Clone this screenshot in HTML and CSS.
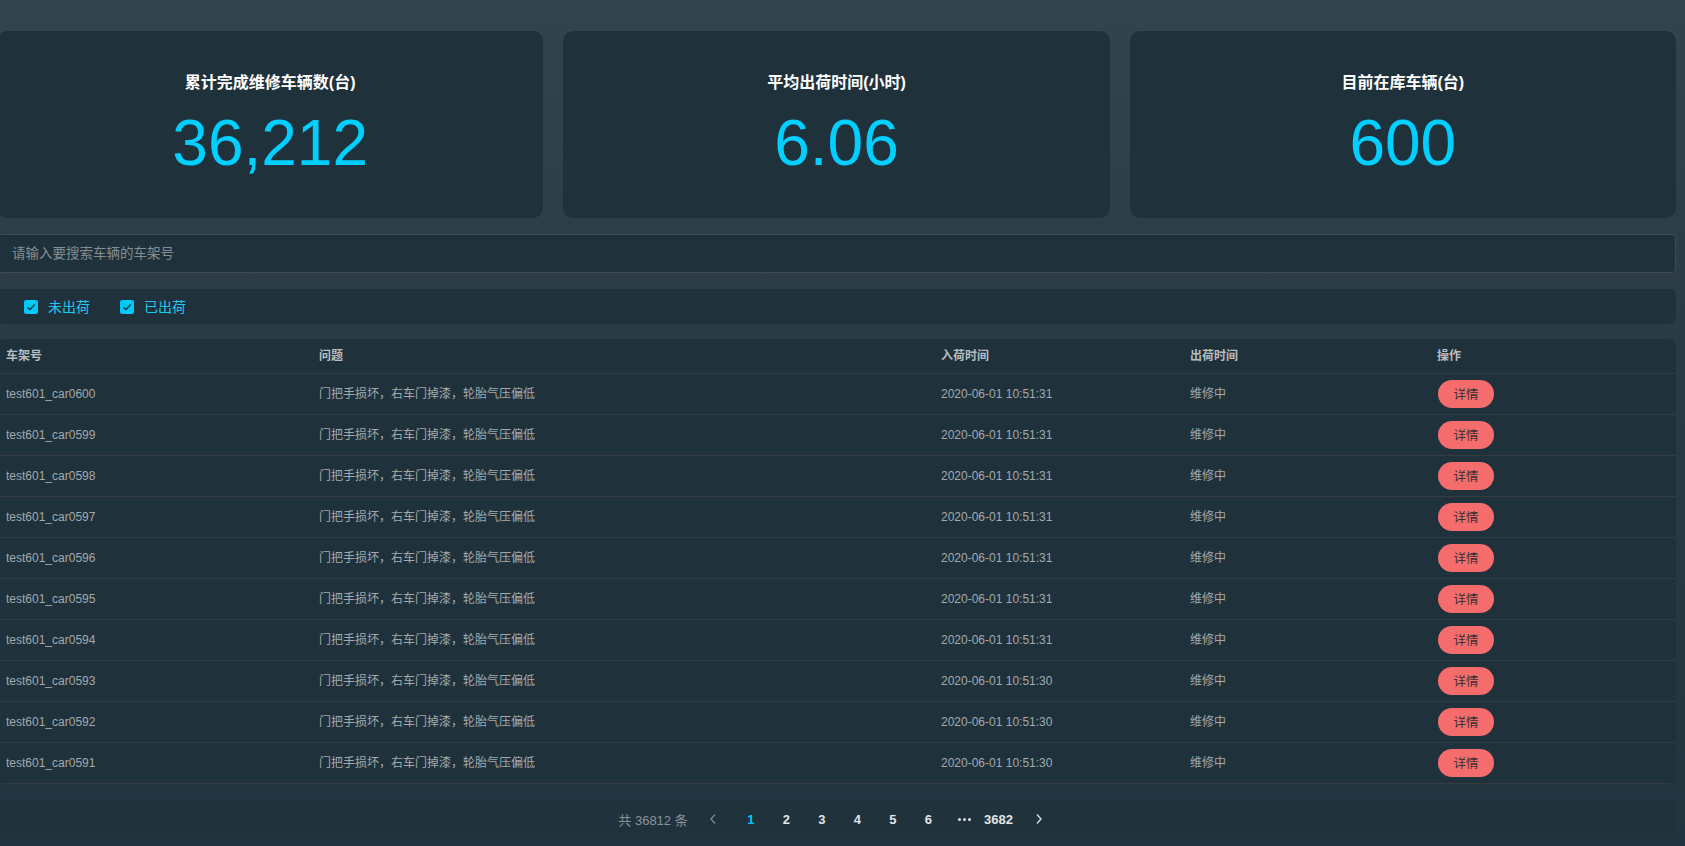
FILE: index.html
```html
<!DOCTYPE html>
<html lang="zh-CN">
<head>
<meta charset="utf-8">
<title>车辆维修</title>
<link rel="stylesheet" href="styles.css">
</head>
<body>
<div class="page">
  <div class="cards">
    <div class="card">
      <div class="card-title">累计完成维修车辆数(台)</div>
      <div class="card-num">36,212</div>
    </div>
    <div class="card">
      <div class="card-title">平均出荷时间(小时)</div>
      <div class="card-num">6.06</div>
    </div>
    <div class="card">
      <div class="card-title">目前在库车辆(台)</div>
      <div class="card-num">600</div>
    </div>
  </div>

  <div class="search">
    <input class="search-input" type="text" placeholder="请输入要搜索车辆的车架号">
  </div>

  <div class="filters">
    <label class="check">
      <span class="box"><svg viewBox="0 0 14 14" width="14" height="14"><path d="M3.5 7.2 L6 9.6 L10.5 4.6" fill="none" stroke="#1f323c" stroke-width="1.4"/></svg></span>
      <span class="check-label">未出荷</span>
    </label>
    <label class="check">
      <span class="box"><svg viewBox="0 0 14 14" width="14" height="14"><path d="M3.5 7.2 L6 9.6 L10.5 4.6" fill="none" stroke="#1f323c" stroke-width="1.4"/></svg></span>
      <span class="check-label">已出荷</span>
    </label>
  </div>

  <div class="table">
    <div class="row head">
      <div class="cell">车架号</div>
      <div class="cell">问题</div>
      <div class="cell">入荷时间</div>
      <div class="cell">出荷时间</div>
      <div class="cell">操作</div>
    </div>
    <div class="row"><div class="cell">test601_car0600</div><div class="cell cjk">门把手损坏，右车门掉漆，轮胎气压偏低</div><div class="cell">2020-06-01 10:51:31</div><div class="cell cjk">维修中</div><div class="cell"><button class="btn">详情</button></div></div>
    <div class="row"><div class="cell">test601_car0599</div><div class="cell cjk">门把手损坏，右车门掉漆，轮胎气压偏低</div><div class="cell">2020-06-01 10:51:31</div><div class="cell cjk">维修中</div><div class="cell"><button class="btn">详情</button></div></div>
    <div class="row"><div class="cell">test601_car0598</div><div class="cell cjk">门把手损坏，右车门掉漆，轮胎气压偏低</div><div class="cell">2020-06-01 10:51:31</div><div class="cell cjk">维修中</div><div class="cell"><button class="btn">详情</button></div></div>
    <div class="row"><div class="cell">test601_car0597</div><div class="cell cjk">门把手损坏，右车门掉漆，轮胎气压偏低</div><div class="cell">2020-06-01 10:51:31</div><div class="cell cjk">维修中</div><div class="cell"><button class="btn">详情</button></div></div>
    <div class="row"><div class="cell">test601_car0596</div><div class="cell cjk">门把手损坏，右车门掉漆，轮胎气压偏低</div><div class="cell">2020-06-01 10:51:31</div><div class="cell cjk">维修中</div><div class="cell"><button class="btn">详情</button></div></div>
    <div class="row"><div class="cell">test601_car0595</div><div class="cell cjk">门把手损坏，右车门掉漆，轮胎气压偏低</div><div class="cell">2020-06-01 10:51:31</div><div class="cell cjk">维修中</div><div class="cell"><button class="btn">详情</button></div></div>
    <div class="row"><div class="cell">test601_car0594</div><div class="cell cjk">门把手损坏，右车门掉漆，轮胎气压偏低</div><div class="cell">2020-06-01 10:51:31</div><div class="cell cjk">维修中</div><div class="cell"><button class="btn">详情</button></div></div>
    <div class="row"><div class="cell">test601_car0593</div><div class="cell cjk">门把手损坏，右车门掉漆，轮胎气压偏低</div><div class="cell">2020-06-01 10:51:30</div><div class="cell cjk">维修中</div><div class="cell"><button class="btn">详情</button></div></div>
    <div class="row"><div class="cell">test601_car0592</div><div class="cell cjk">门把手损坏，右车门掉漆，轮胎气压偏低</div><div class="cell">2020-06-01 10:51:30</div><div class="cell cjk">维修中</div><div class="cell"><button class="btn">详情</button></div></div>
    <div class="row"><div class="cell">test601_car0591</div><div class="cell cjk">门把手损坏，右车门掉漆，轮胎气压偏低</div><div class="cell">2020-06-01 10:51:30</div><div class="cell cjk">维修中</div><div class="cell"><button class="btn">详情</button></div></div>
  </div>

  <div class="pager">
    <span class="total">共 36812 条</span>
    <span class="pg arrow"><svg viewBox="0 0 10 12" width="10" height="12"><path d="M7 1.5 L3 6 L7 10.5" fill="none" stroke="#7d878c" stroke-width="1.4"/></svg></span>
    <span class="pg active">1</span>
    <span class="pg">2</span>
    <span class="pg">3</span>
    <span class="pg">4</span>
    <span class="pg">5</span>
    <span class="pg">6</span>
    <span class="pg dots"><i></i><i></i><i></i></span>
    <span class="pg last">3682</span>
    <span class="pg arrow next"><svg viewBox="0 0 10 12" width="10" height="12"><path d="M3 1.5 L7 6 L3 10.5" fill="none" stroke="#d8dcde" stroke-width="1.4"/></svg></span>
  </div>
</div>
</body>
</html>
```

FILE: styles.css
```css
* { box-sizing: border-box; }
html, body {
  margin: 0;
  padding: 0;
  height: 100%;
}
body {
  background: linear-gradient(180deg, #34444f 0%, #2b3b46 40%, #233440 100%);
  font-family: "Liberation Sans", Arial, "Noto Sans CJK SC", sans-serif;
  overflow: hidden;
}
.page {
  margin-left: -3px;
  width: 1679px;
  padding-top: 31px;
  display: flex;
  flex-direction: column;
}
.cards {
  display: grid;
  grid-template-columns: 1fr 1fr 1fr;
  column-gap: 20px;
  height: 187px;
}
.card {
  background: #1f323c;
  border-radius: 10px;
  display: flex;
  flex-direction: column;
  align-items: center;
  padding-top: 40px;
}
.card-title {
  color: #ffffff;
  font-size: 16px;
  font-weight: bold;
  line-height: 24px;
}
.card-num {
  color: #00cfff;
  font-size: 64px;
  line-height: 70px;
  margin-top: 13px;
}
.search {
  margin-top: 16px;
  height: 39px;
}
.search-input {
  width: 100%;
  height: 39px;
  background: #1f323c;
  border: 1px solid #414a4e;
  border-radius: 4px;
  padding: 0 14px;
  font-family: "Liberation Sans", Arial, "Noto Sans CJK SC", sans-serif;
  font-size: 13.5px;
  color: #c0c4c6;
  outline: none;
}
.search-input::placeholder { color: #858d92; }
.filters {
  margin-top: 16px;
  height: 35px;
  background: #1f323c;
  border-radius: 6px;
  display: flex;
  align-items: center;
  padding-left: 27px;
  gap: 30px;
}
.check {
  display: flex;
  align-items: center;
  gap: 10px;
}
.box {
  width: 14px;
  height: 14px;
  background: #00c8f8;
  border-radius: 2px;
  display: flex;
}
.check-label {
  color: #1ec8f0;
  font-size: 14px;
  line-height: 14px;
}
.table {
  margin-top: 15px;
  background: #1f323c;
  border-radius: 8px;
  overflow: hidden;
}
.row {
  display: grid;
  grid-template-columns: 313px 622px 249px 247px 1fr;
  height: 41px;
  border-bottom: 1px solid #353b3e;
  align-items: center;
}
.row.head {
  height: 35px;
  padding-bottom: 1px;
}
.cell {
  padding-left: 9px;
  font-size: 12px;
  line-height: 16px;
  color: #a3a9ac;
  white-space: nowrap;
}
.cell.cjk { font-size: 12px; margin-top: -1px; }
.head .cell {
  color: #b8bdc0;
  font-weight: bold;
  font-size: 12px;
}
.btn {
  width: 56px;
  height: 28px;
  border: none;
  border-radius: 14px;
  background: #f56c6c;
  color: #3a3030;
  font-family: "Liberation Sans", Arial, "Noto Sans CJK SC", sans-serif;
  font-size: 12.5px;
  padding: 0 0 2px 0;
  margin-left: 1px;
  display: block;
}
.pager {
  margin-top: 16px;
  height: 38px;
  background: #20323c;
  border-radius: 8px;
  display: flex;
  align-items: center;
  justify-content: center;
  padding-left: 2px;
}
.total {
  color: #8a9297;
  font-size: 13px;
  margin-right: 8px;
}
.pg {
  min-width: 35.5px;
  text-align: center;
  color: #e2e5e7;
  font-size: 13px;
  font-weight: bold;
  display: flex;
  justify-content: center;
  align-items: center;
  gap: 2px;
}
.pg.active { color: #00c8f8; margin-left: 2px; }
.pg.dots { margin-left: 1px; }
.pg.last { margin-left: -2px; }
.pg.next { margin-left: 5px; }
.dots i {
  width: 3px;
  height: 3px;
  border-radius: 50%;
  background: #e2e5e7;
  display: block;
}
```
